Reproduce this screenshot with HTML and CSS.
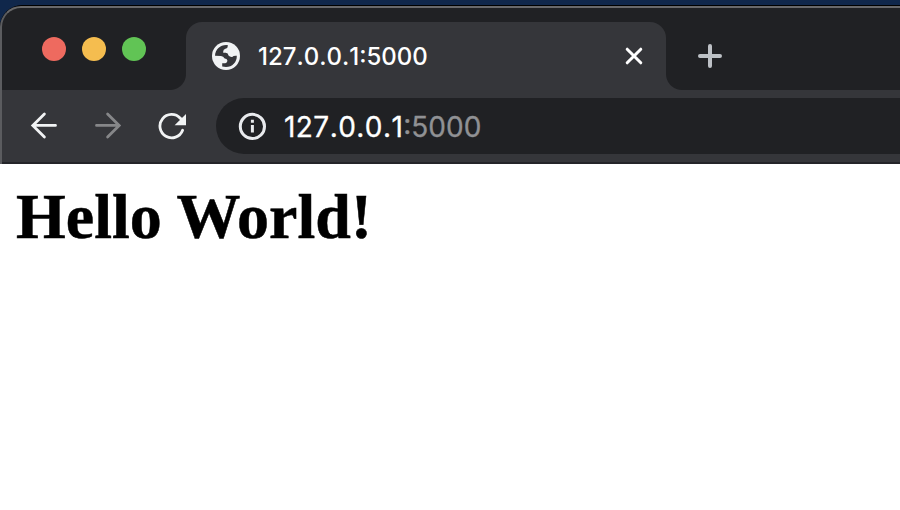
FILE: index.html
```html
<!DOCTYPE html>
<html lang="en">
<head>
<meta charset="utf-8">
<title>127.0.0.1:5000</title>
<link rel="stylesheet" href="styles.css">
</head>
<body>
<div class="window">
  <header class="chrome">
    <div class="tab-strip">
      <div class="lights"><i class="light red"></i><i class="light yellow"></i><i class="light green"></i></div>
      <div class="tab">
        <svg class="globe" width="28" height="28" viewBox="0 0 28 28"><circle cx="14" cy="14" r="14" fill="#f1f3f4"/><path fill="#35363a" d="M3 13.8C3.2 7.4 8.2 3 14.2 3L16 3.3Q16 6.2 13.4 6.8Q11.2 7.3 11.2 9.6V10.8H13.8Q16.2 11 16.5 13.5Q18 15.2 20.2 14.9Q21.5 13.5 24.8 13.8C25 20.4 20.2 25 14 25L10.2 24.4V21.3H13.3Q15.6 20.8 15.4 18.6Q15 16.8 12.7 16.6Q11.4 14.2 9 14.1Z"/></svg>
        <span class="tab-title">127.0.0.1:5000</span>
        <svg class="close" width="20" height="20" viewBox="0 0 20 20"><path d="M3.2 3.2L16.8 16.8M16.8 3.2L3.2 16.8"/></svg>
      </div>
      <svg class="plus" width="24" height="24" viewBox="0 0 24 24"><path d="M12 2V22M2 12H22"/></svg>
    </div>
    <div class="toolbar">
      <svg class="nav" width="28" height="28" viewBox="0 0 28 28"><path d="M25.5 14.4H3M14.4 2.9L2.8 14.4L14.4 25.9"/></svg>
      <svg class="nav forward" width="28" height="28" viewBox="0 0 28 28"><path d="M2.5 14.4H25M13.6 2.9L25.2 14.4L13.6 25.9"/></svg>
      <svg class="nav reload" width="28" height="28" viewBox="0 0 28 28"><path d="M24.6 18.2A11.7 11.7 0 1 1 22.3 6.2L24 8"/><path class="head" d="M28 2V13.2H16.6Z"/></svg>
      <div class="address">
        <svg class="info" width="28" height="28" viewBox="0 0 28 28"><circle cx="14.4" cy="14.4" r="12.1"/><path d="M14.4 13V20.6M14.4 7.8V10.8"/></svg>
        <span class="url"><span class="host">127.0.0.1</span><span class="port">:5000</span></span>
      </div>
    </div>
  </header>
  <main><h1>Hello World!</h1></main>
</div>
</body>
</html>
```
FILE: styles.css
```css
* { box-sizing: border-box; }
body { margin: 0; padding-top: 5px; height: 510px; overflow: hidden; background: linear-gradient(#10274b 0 30px, #fff 30px); }
.window { height: 505px; border-top: 1px solid #000; border-radius: 22px 0 0 0; background: #000; }
.chrome { height: 158px; border-top: 2px solid #69696b; border-left: 2px solid #5b5c5f; border-radius: 21px 0 0 0; background: #202124; overflow: hidden; }
.tab-strip { display: flex; height: 82px; padding-left: 40px; }
.lights { display: flex; gap: 16px; width: 144px; padding-top: 29px; }
.light { width: 24px; height: 24px; border-radius: 50%; }
.red { background: #ee6a5f; }
.yellow { background: #f5bd4f; }
.green { background: #61c455; }
.tab { position: relative; display: flex; align-items: center; width: 480px; height: 68px; margin-top: 14px; padding: 0 22px 0 26px; border-radius: 16px 16px 0 0; background: #35363a; }
.tab::before, .tab::after { content: ""; position: absolute; bottom: 0; width: 16px; height: 16px; }
.tab::before { left: -16px; background: radial-gradient(circle at 0 0, transparent 15.5px, #35363a 16.5px); }
.tab::after { right: -16px; background: radial-gradient(circle at 100% 0, transparent 15.5px, #35363a 16.5px); }
.tab-title { margin-left: 18px; padding-top: 1px; font: 500 24px/29px Inter, sans-serif; font-kerning: none; color: #fff; }
.close { margin-left: auto; fill: none; stroke: #fff; stroke-width: 3; stroke-linecap: round; }
.plus { margin: 36px 0 0 32px; fill: none; stroke: #bdc1c6; stroke-width: 4; stroke-linecap: round; }
.toolbar { display: flex; height: 74px; padding: 8px 0 8px 28px; background: #35363a; border-bottom: 2px solid #242529; }
.nav { margin: 13px 36px 0 0; fill: none; stroke: #f1f3f4; stroke-width: 2.8; stroke-linecap: round; }
.forward { stroke: #868789; }
.reload { margin-top: 14px; margin-right: 30px; }
.head { fill: #f1f3f4; stroke: none; }
.address { display: flex; flex: 1; align-items: center; height: 56px; padding-left: 22px; border-radius: 28px 0 0 28px; background: #202124; }
.info { fill: none; stroke: #e8eaed; stroke-width: 3; }
.url { margin-left: 18px; padding-top: 2px; font: 400 28px/36px Inter, sans-serif; font-kerning: none; color: #fff; -webkit-text-stroke: 0.3px; }
.host { letter-spacing: 0.45px; }
.port { color: #909194; }
main { height: 346px; padding: 16px; background: #fff; }
h1 { margin: 0; font: bold 64px/74px "Liberation Serif", serif; color: #000; -webkit-text-stroke: 0.5px; }
```
